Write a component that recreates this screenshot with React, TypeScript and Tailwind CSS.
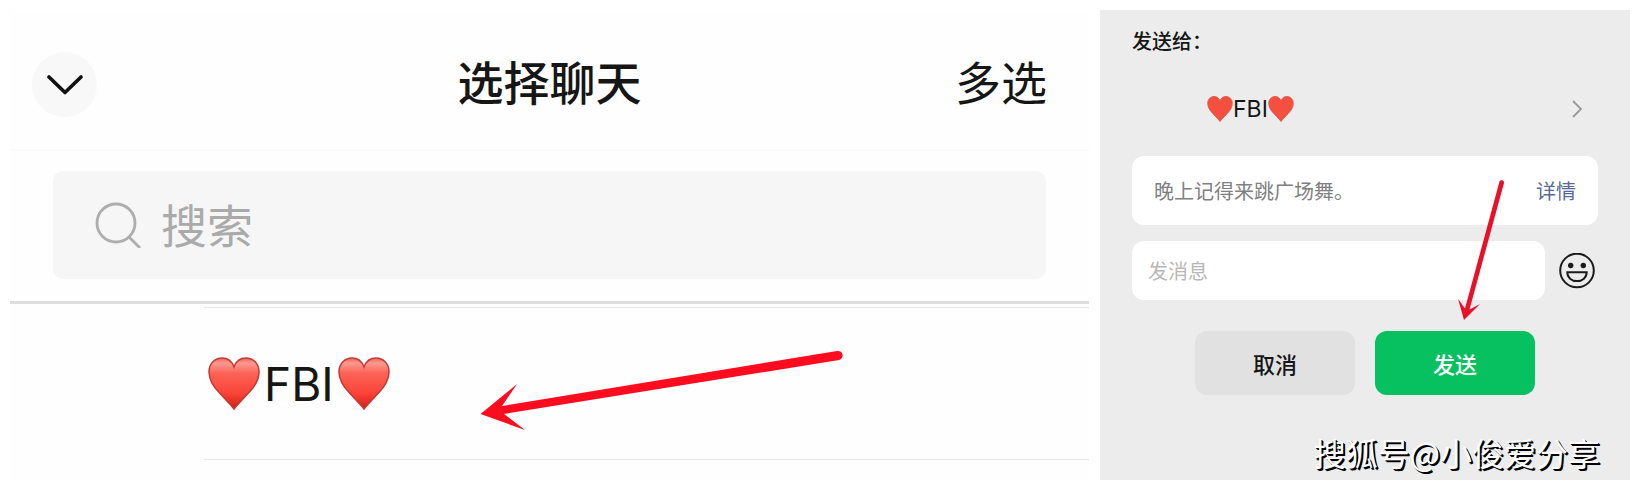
import { useState } from "react";

// Corazón usado a los lados del nombre del chat
function Heart({ id, glossy, className }: { id: string; glossy?: boolean; className: string }) {
  const shape = "M26 52 C24 49 18 43 12 36.500 C5 29.500 1 23 1 15 C1 6.500 7 1 14 1 C20 1 24 4.500 26 10 C28 4.500 32 1 38 1 C45 1 51 6.500 51 15 C51 23 47 29.500 40 36.500 C34 43 28 49 26 52 Z";
  return (
    <svg viewBox="0 0 52 53" className={className} aria-hidden="true">
      <defs>
        <linearGradient id={id} x1="0" y1="0" x2="0" y2="1">
          <stop offset="0" stopColor="#ec6258" />
          <stop offset="0.100" stopColor="#fa9a90" />
          <stop offset="0.300" stopColor="#fc6257" />
          <stop offset="0.700" stopColor="#fb4337" />
          <stop offset="1" stopColor="#cf1d14" />
        </linearGradient>
      </defs>
      <path
        d={shape}
        fill={glossy ? `url(#${id})` : "#f4503f"}
        stroke={glossy ? "#c33a35" : "#dd5a4b"}
        strokeWidth={glossy ? 1.5 : 1.8}
      />
    </svg>
  );
}

function ChatPicker() {
  const [query, setQuery] = useState("");

  return (
    <section className="relative min-w-0 bg-[#fefefe]">
      {/* Header */}
      <header className="grid grid-cols-[1fr_auto_1fr] items-start border-b-2 border-[#fafafa] px-[22px] pt-[42px] pb-8">
        <button aria-label="关闭" className="flex h-[65px] w-[65px] items-center justify-center rounded-full bg-[#f8f8f8]">
          <svg viewBox="0 0 36 20" className="h-5 w-9" fill="none" stroke="#111" strokeWidth="3.600">
            <path d="M2 2 L18 17.500 L34 2" strokeLinecap="round" strokeLinejoin="round" />
          </svg>
        </button>
        <h1 className="text-[46px] leading-[56px] font-medium">选择聊天</h1>
        <button className="justify-self-end pr-5 text-[46px] leading-[56px]">多选</button>
      </header>

      {/* Search */}
      <div className="border-b-[3px] border-[#dedede] px-[43px] pt-5 pb-[22px]">
        <label className="flex items-center gap-5 rounded-[10px] bg-[#f6f6f6] px-[42px] py-[22px]">
          <svg viewBox="0 0 46 46" className="h-[46px] w-[46px] shrink-0" fill="none" stroke="#aeaeae" strokeWidth="2.800">
            <circle cx="21" cy="21" r="19" />
            <path d="M33.500 34.500 L45 46" />
          </svg>
          <input
            value={query}
            onChange={(e) => setQuery(e.target.value)}
            placeholder="搜索"
            aria-label="搜索"
            className="h-16 min-w-0 flex-1 bg-transparent pb-1 text-[46px] outline-none placeholder:text-[#aaaaaa]"
          />
        </label>
      </div>

      {/* Chat list */}
      <ul className="pt-[3px] pb-5 pl-[194px]">
        <li className="flex h-[153px] items-center gap-1 border-y border-[#e6e6e6] pl-1">
          <Heart id="list-heart-a" glossy className="h-[53px] w-[52px]" />
          <span className="font-['Inter'] text-[46px] leading-[56px]">FBI</span>
          <Heart id="list-heart-b" glossy className="h-[53px] w-[52px]" />
        </li>
      </ul>

      {/* Arrow pointing at the chat */}
      <svg viewBox="0 -2 364 84" className="pointer-events-none absolute top-[340px] left-[470px] h-[84px] w-[364px]" fill="#fb0c1f">
        <path d="M0.500 62 L37 32 L22 54 L357 -1 A4.600 4.600 0 0 1 359 8 L24 62 L45 78 Z" />
      </svg>
    </section>
  );
}

function SendDialog() {
  const [message, setMessage] = useState("");

  return (
    <section className="relative min-w-0 bg-[#ececec] px-8 pt-[21px]">
      <h2 className="text-xl leading-5 font-medium">发送给：</h2>

      {/* Recipient */}
      <button className="mt-10 flex h-9 w-full items-center pr-4 pl-[75px]">
        <Heart id="to-heart-a" className="h-[26px] w-[26px]" />
        <span className="font-['Inter'] text-[23px] leading-9">FBI</span>
        <Heart id="to-heart-b" className="h-[26px] w-[26px]" />
        <svg viewBox="0 0 10 18" className="ml-auto h-[18px] w-2.5" fill="none" stroke="#999" strokeWidth="1.800">
          <path d="M1 1 L9 9 L1 17" />
        </svg>
      </button>

      {/* Forwarded message */}
      <div className="mt-[29px] flex h-[69px] items-center justify-between rounded-xl bg-white px-[22px] text-xl">
        <p className="text-[#7f7f7f]">晚上记得来跳广场舞。</p>
        <a href="#detail" className="text-[#576b95]">详情</a>
      </div>

      <div className="mt-4 flex items-center gap-3.5 pr-[3px]">
        <input
          value={message}
          onChange={(e) => setMessage(e.target.value)}
          placeholder="发消息"
          aria-label="发消息"
          className="h-[59px] min-w-0 flex-1 rounded-xl bg-white px-4 text-xl outline-none placeholder:text-[#b8b8b8]"
        />
        <button aria-label="表情">
          <svg viewBox="0 0 36 36" className="h-9 w-9" fill="none" stroke="#1b1b1b" strokeWidth="2">
            <circle cx="18" cy="17.500" r="16.800" />
            <circle cx="11.700" cy="12.500" r="2.700" fill="#1b1b1b" stroke="none" />
            <circle cx="24.300" cy="12.500" r="2.700" fill="#1b1b1b" stroke="none" />
            <path d="M8.300 19.300 H27.700 C27.700 24.500 23.500 28.100 18 28.100 C12.500 28.100 8.300 24.500 8.300 19.300 Z" />
          </svg>
        </button>
      </div>

      <div className="mt-[31px] flex justify-center gap-5 text-[22px] font-medium">
        <button className="h-16 w-40 rounded-xl bg-[#e1e1e1]">取消</button>
        <button className="h-16 w-40 rounded-xl bg-[#07c160] text-white">发送</button>
      </div>

      {/* Arrow pointing at the send button */}
      <svg viewBox="0 0 50 144" className="pointer-events-none absolute top-[168px] right-[124px] h-[144px] w-[50px]" fill="#ea1029">
        <path d="M8 142 L2 120.700 L9 130.500 L43.500 3.500 A2.400 2.400 0 0 1 48 5 L13.500 131.500 L24 126 Z" />
      </svg>

      <p className="absolute right-[30px] bottom-2 text-[32px] leading-10 whitespace-nowrap text-white [text-shadow:1px_1px_0_#000,2px_2px_0_#000]">
        搜狐号@小俊爱分享
      </p>
    </section>
  );
}

export default function App() {
  return (
    <main className="grid grid-cols-[1079fr_530fr] gap-[11px] bg-white p-2.5 font-['Noto_Sans_CJK_SC',sans-serif] text-[#161616]">
      <ChatPicker />
      <SendDialog />
    </main>
  );
}
